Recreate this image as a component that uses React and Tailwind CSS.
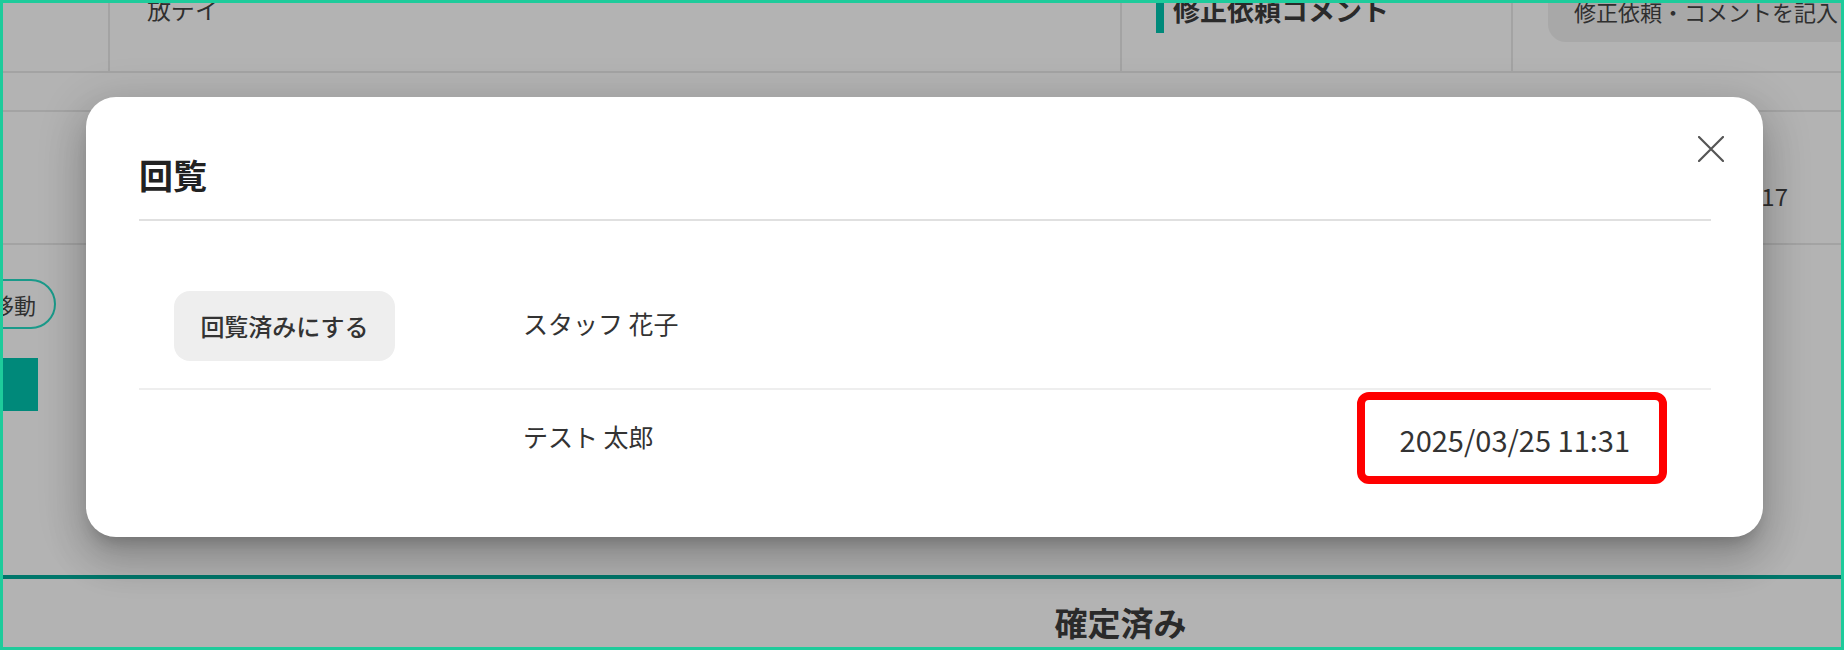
import React from 'react';

const font = "font-['Noto_Sans_CJK_JP','Noto_Sans',sans-serif]";

const CloseIcon = () => (
    <svg width="26" height="26" viewBox="0 0 26 26" fill="none">
        <path d="M1 1L25 25M25 1L1 25" stroke="#555555" strokeWidth="2.2" strokeLinecap="round" />
    </svg>
);

// Background page (dimmed by the dialog backdrop)
const BackgroundPage = () => (
    <div className="flex flex-col">
        {/* header row of the table */}
        <div className="flex h-[70px] border-b-2 border-[#a3a3a3]">
            <div className="w-[107px] border-r-2 border-[#a3a3a3]" />
            <div className="w-[1012px] border-r-2 border-[#a3a3a3] pl-[37px]">
                <p className="text-[24px] leading-[24px] -mt-[6px] text-[#2f2f2f]">放デイ</p>
            </div>
            <div className="w-[391px] border-r-2 border-[#a3a3a3] pl-[34px] flex items-start gap-[9px]">
                <span className="w-[8px] h-[30px] bg-[#00897a]" />
                <p className="text-[27px] leading-[27px] -mt-[7px] font-bold text-[#2a2a2a]">修正依頼コメント</p>
            </div>
            <div className="flex-1 pl-[35px]">
                <div className="h-[42px] rounded-bl-[18px] bg-[#a8a8a8] pl-[26px]">
                    <p className="text-[22px] leading-[22px] -mt-[3px] text-[#2f2f2f] whitespace-nowrap">修正依頼・コメントを記入</p>
                </div>
            </div>
        </div>
        <div className="h-[39px] border-b-2 border-[#a3a3a3]" />
        <div className="h-[133px] border-b-2 border-[#a3a3a3] flex justify-end items-start pt-[72px] pr-[53px]">
            <p className="text-[24px] leading-[24px] text-[#2f2f2f]">2025/03/17</p>
        </div>
        <div className="h-[334px] border-b-4 border-[#00776b] flex flex-col items-start">
            <div className="mt-[34px] -ml-[27px] w-[80px] h-[50px] rounded-full border-2 border-[#1a9a8a] flex items-center justify-end pr-[18px]">
                <span className="text-[22px] leading-[22px] text-[#2f2f2f] whitespace-nowrap">移動</span>
            </div>
            <div className="mt-[29px] w-[35px] h-[53px] bg-[#00897a]" />
        </div>
        <div className="flex h-[68px]">
            <div className="w-[397px]" />
            <div className="flex-1 flex justify-center pt-[23px]">
                <p className="text-[33px] leading-[40px] font-bold text-[#2a2a2a]">確定済み</p>
            </div>
        </div>
    </div>
);

const viewers = [
    { name: 'スタッフ 花子', readAt: null, showButton: true },
    { name: 'テスト 太郎', readAt: '2025/03/25 11:31', showButton: false },
];

const CirculationDialog = () => (
    <div className="absolute left-[83px] top-[94px] w-[1677px] bg-white rounded-[30px] shadow-[0_11px_15px_-7px_rgba(0,0,0,0.2),0_24px_38px_3px_rgba(0,0,0,0.14),0_9px_46px_8px_rgba(0,0,0,0.12)]">
        <button className="absolute right-[39px] top-[39px]">
            <CloseIcon />
        </button>
        <div className="pl-[53px] pr-[52px] pt-[56px]">
            <h2 className="text-[34px] leading-[44px] font-bold text-[#222222] pb-[22px] border-b-2 border-[#e0e0e0]">回覧</h2>
        </div>
        <div className="pl-[53px] pr-[52px] pt-[43px] pb-[49px]">
            {viewers.map((v, i) => (
                <div key={i} className={`flex items-center py-[27px] pl-[35px] pr-[81px] ${i > 0 ? 'border-t-2 border-[#eeeeee]' : ''}`}>
                    <div className="w-[349px] shrink-0">
                        {v.showButton && (
                            <button className="w-[221px] h-[70px] rounded-[16px] bg-[#eeeeee] text-[24px] font-medium text-[#333333]">
                                回覧済みにする
                            </button>
                        )}
                    </div>
                    <p className="text-[25px] leading-[38px] mb-[6px] text-[#333333]">{v.name}</p>
                    {v.readAt && (
                        <span className="ml-auto relative text-[29px] leading-[44px] text-[#333333]">
                            {v.readAt}
                            <span className="absolute -top-[25px] -bottom-[23px] -left-[43px] -right-[37px] border-[8px] border-[#ff0000] rounded-[12px]" />
                        </span>
                    )}
                </div>
            ))}
        </div>
    </div>
);

export default function App() {
    return (
        <div className={`${font} relative w-[1844px] h-[650px] overflow-hidden bg-[#b3b3b3] border-[3px] border-[#1ecb9b]`}>
            <BackgroundPage />
            <CirculationDialog />
        </div>
    );
}
